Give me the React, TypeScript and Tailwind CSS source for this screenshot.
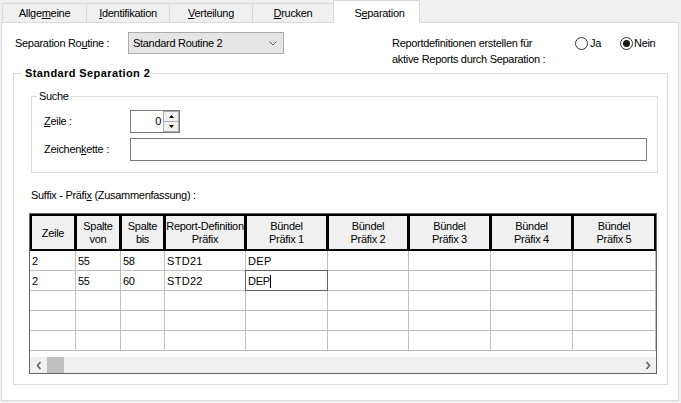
import React from "react";

const cols = [46, 45, 44, 81, 82, 81, 82, 82, 83];
const headers: [string, string][] = [
  ["Zeile", ""],
  ["Spalte", "von"],
  ["Spalte", "bis"],
  ["Report-Definition", "Präfix"],
  ["Bündel", "Präfix 1"],
  ["Bündel", "Präfix 2"],
  ["Bündel", "Präfix 3"],
  ["Bündel", "Präfix 4"],
  ["Bündel", "Präfix 5"],
];
const rows: string[][] = [
  ["2", "55", "58", "STD21", "DEP", "", "", "", ""],
  ["2", "55", "60", "STD22", "DEP", "", "", "", ""],
  ["", "", "", "", "", "", "", "", ""],
  ["", "", "", "", "", "", "", "", ""],
  ["", "", "", "", "", "", "", "", ""],
];

function Tab({ w, children }: { w: string; children: React.ReactNode }) {
  return (
    <div
      className={`${w} h-[19px] bg-[#f0f0f0] border-t border-l border-[#d9d9d9] flex items-center justify-center pt-[1px]`}
    >
      <span>{children}</span>
    </div>
  );
}

function Radio({ checked }: { checked?: boolean }) {
  return (
    <div className="w-[13px] h-[13px] rounded-full border border-[#333333] bg-white flex items-center justify-center">
      {checked && <div className="w-[7px] h-[7px] rounded-full bg-[#1a1a1a]" />}
    </div>
  );
}

function Chevron({ dir }: { dir: "left" | "right" }) {
  return (
    <svg width="6" height="9" viewBox="0 0 6 9">
      {dir === "left" ? (
        <path d="M4.5 1 L1.5 4.5 L4.5 8" fill="none" stroke="#606060" strokeWidth="1.6" />
      ) : (
        <path d="M1.5 1 L4.5 4.5 L1.5 8" fill="none" stroke="#606060" strokeWidth="1.6" />
      )}
    </svg>
  );
}

export default function App() {
  return (
    <div className="w-[681px] h-[403px] bg-[#f0f0f0] overflow-hidden text-[11px] tracking-[-0.3px] text-black font-['Liberation_Sans',Arial,sans-serif]">
      {/* Tabs */}
      <div className="flex items-end h-[22px] pl-[2px]">
        <Tab w="w-[84px]">
          Allge<u>m</u>eine
        </Tab>
        <Tab w="w-[83px]">
          <u>I</u>dentifikation
        </Tab>
        <Tab w="w-[83px]">
          <u>V</u>erteilung
        </Tab>
        <Tab w="w-[81px]">
          <u>D</u>rucken
        </Tab>
        <div className="relative z-10 -mb-px h-[23px] w-[87px] bg-white border border-b-0 border-[#d9d9d9] flex items-start justify-center pt-[4px] pl-[6px]">
          <span>
            S<u>e</u>paration
          </span>
        </div>
      </div>

      {/* Panel */}
      <div className="ml-[1px] w-[678px] h-[379px] bg-white border border-[#d9d9d9]">
        {/* Row 1 */}
        <div className="flex items-start pt-[9px] pl-[13px]">
          <div className="w-[113px] h-[22px] flex items-center">
            <span>
              Separation Ro<u>u</u>tine :
            </span>
          </div>
          <div className="w-[156px] h-[22px] bg-[#e5e5e5] border border-[#adadad] flex items-center justify-between pl-[4px] pr-[6px]">
            <span>Standard Routine 2</span>
            <svg width="8" height="5" viewBox="0 0 8 5">
              <path d="M0.5 0.5 L4 4 L7.5 0.5" fill="none" stroke="#606060" strokeWidth="1" />
            </svg>
          </div>
          <div className="ml-[108px] mt-[3px] w-[183px] leading-[16px]">
            <div>Reportdefinitionen erstellen für</div>
            <div>aktive Reports durch Separation :</div>
          </div>
          <div className="mt-[3px] h-[16px] flex items-center">
            <div className="w-[45px] flex items-center gap-[2px]">
              <Radio />
              <span>Ja</span>
            </div>
            <div className="flex items-center gap-[1px]">
              <Radio checked />
              <span>Nein</span>
            </div>
          </div>
        </div>

        {/* Group box */}
        <fieldset className="ml-[11px] -mt-px w-[655px] border border-[#dcdcdc] pb-[10px]">
          <legend className="ml-[8px] px-[3px] font-bold leading-[14px] tracking-[0.4px]">Standard Separation 2</legend>

          {/* Suche */}
          <fieldset className="ml-[17px] mt-[9px] w-[627px] border border-[#dcdcdc] pb-[11px]">
            <legend className="ml-[5px] px-[2px] leading-[14px]">Suche</legend>
            <div className="flex items-center pl-[12px] mt-[7px]">
              <div className="w-[86px]">
                <u>Z</u>eile :
              </div>
              <div className="w-[50px] h-[23px] border border-[#7a7a7a] flex bg-white">
                <div className="flex-1 flex items-center justify-end pr-[2px]">0</div>
                <div className="w-[16px] flex flex-col border border-[#adadad]">
                  <div className="flex-1 bg-[#f0f0f0] border-b border-[#adadad] flex items-center justify-center">
                    <svg width="5" height="3" viewBox="0 0 5 3">
                      <path d="M2.5 0 L5 3 L0 3 Z" fill="#000" />
                    </svg>
                  </div>
                  <div className="flex-1 bg-[#f0f0f0] flex items-center justify-center">
                    <svg width="5" height="3" viewBox="0 0 5 3">
                      <path d="M0 0 L5 0 L2.5 3 Z" fill="#000" />
                    </svg>
                  </div>
                </div>
              </div>
            </div>
            <div className="flex items-center pl-[12px] mt-[5px]">
              <div className="w-[86px]">
                Zeichen<u>k</u>ette :
              </div>
              <div className="w-[517px] h-[23px] border border-[#7a7a7a] bg-white" />
            </div>
          </fieldset>

          <div className="ml-[17px] mt-[15px] leading-[14px]">
            Suffix - Präfi<u>x</u> (Zusammenfassung) :
          </div>

          {/* Table */}
          <div className="ml-[15px] mt-[11px] w-[628px] border border-[#646464] bg-white overflow-hidden">
            <div className="flex h-[37px]">
              {headers.map((h, i) => (
                <div
                  key={i}
                  style={{ width: cols[i] }}
                  className={`shrink-0 bg-[#f0f0f0] border-t-2 border-r-2 border-b-2 border-black ${
                    i === 0 ? "border-l-2" : "border-l"
                  } flex flex-col items-center justify-center overflow-hidden leading-[13px] pt-[1px]`}
                >
                  <span className="whitespace-nowrap">{h[0]}</span>
                  {h[1] && <span className="whitespace-nowrap">{h[1]}</span>}
                </div>
              ))}
            </div>
            {rows.map((r, ri) => (
              <div key={ri} className="flex h-[20px]">
                {r.map((c, ci) => (
                  <div
                    key={ci}
                    style={{ width: cols[ci] }}
                    className="shrink-0 relative border-r border-b border-[#c0c0c0] flex items-center pl-[2px] pt-[1px]"
                  >
                    {ri === 1 && ci === 4 ? (
                      <div className="absolute -top-px -left-px w-[83px] h-[21px] border border-[#646464] bg-white flex items-center pl-[2px] pt-[1px]">
                        <span>DEP</span>
                        <span className="inline-block w-px h-[13px] bg-black" />
                      </div>
                    ) : (
                      <span className={ci === 3 || ci === 4 ? "tracking-[0.3px]" : ""}>{c}</span>
                    )}
                  </div>
                ))}
              </div>
            ))}
            <div className="h-[6px]" />
            <div className="h-[16px] bg-[#f0f0f0] flex items-stretch">
              <div className="w-[17px] flex items-center justify-center">
                <Chevron dir="left" />
              </div>
              <div className="w-[17px] bg-[#c0c0c0]" />
              <div className="flex-1" />
              <div className="w-[17px] flex items-center justify-center">
                <Chevron dir="right" />
              </div>
            </div>
          </div>
        </fieldset>
      </div>
    </div>
  );
}
